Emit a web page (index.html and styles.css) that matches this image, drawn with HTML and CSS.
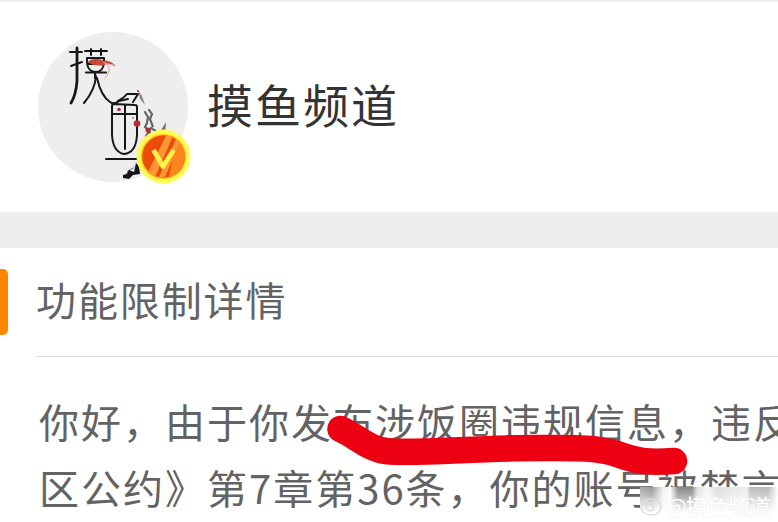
FILE: index.html
```html
<!DOCTYPE html>
<html lang="zh-CN">
<head>
<meta charset="utf-8">
<title>功能限制详情</title>
<link rel="stylesheet" href="styles.css">
</head>
<body>
<header class="profile">
  <svg class="avatar" width="156" height="156" viewBox="36 30 156 156" fill="none" stroke="#171719" stroke-linecap="round" stroke-linejoin="round">
    <circle cx="113" cy="107" r="75" fill="#eeeeef" stroke="none"/>
    <g stroke-width="2">
      <path d="M70 52h12M71 66l11-4M85 51h22M91 49v6M101 49v6M87 58h17v5q-1 9-8 9-8 0-9-9zM88 64h15M86 72.500h20M95 72v6"/>
      <path d="M77 48v33q-1 14-6 22" stroke-width="2.800"/>
      <path d="M96 76q-1 14-12 27M97 78q4 18 13 24 4 3 9-1l9-2" />
      <path d="M118 101q6-3 9-7h11l-5 8"/>
      <path d="M112 114v-8q0-2 2-2l21 1q2 0 2 2v28q-1 18-13 19-11-2-12-19zM112 114h25M125 105v44"/>
      <path d="M106 159h34"/>
    </g>
    <path d="M87 62q8-6 17-1 6-1 12 5-7-4-12-1-8 2-17-3z" fill="#c74839" stroke="none"/>
    <path d="M104 62q6 4 5 9-1 4-4 7M104 63l11 3" stroke="#dda09b" stroke-width="1"/>
    <path d="M138 90l4 6 3 9-5-6z" fill="#888" stroke="none"/>
    <path d="M145 112l3 5-1 6-2 4 5 5-2 8M149 110l3 4-2 5 3 8M146 136l5-8 6 4" stroke="#66666a" stroke-width="2.200" stroke-dasharray="3 .8"/>
    <path d="M160 132l6-10-1 12z" fill="#79696c" stroke="none"/>
    <path d="M137 159l-3 8-4 2 1 5-6 3 3-7 5-1z" fill="#777" stroke="none"/>
    <path d="M123 175l4-1 2-4 5 2 2-9 3 3 1 8-7 1-4 4-6-1z" fill="#151516" stroke="none"/>
    <g fill="#b92931" stroke="none"><circle cx="119" cy="109.500" r="1.8"/><circle cx="137" cy="123.500" r="3.300"/><circle cx="148" cy="130" r="2.500"/><circle cx="138" cy="91" r="1"/><circle cx="133" cy="118" r=".8"/></g>
    <circle cx="163.500" cy="156.500" r="27" fill="#fffa55" stroke="none"/>
    <circle cx="163.500" cy="156.500" r="22" fill="#ed4b08" stroke="#ffc91c" stroke-width="1.500"/>
    <path d="M176 139q9 7 9 17-1 18-16 21z" fill="#fb8620" stroke="none"/>
    <path d="M166 136h7l-18 41-7-5zM176 139l4 3-15 35h-6z" fill="#ff9636" stroke="none"/>
    <path d="M153.500 150l9.500 16.500L173.500 150" stroke="#fff34a" stroke-width="4.800" stroke-linecap="butt"/>
  </svg>
  <h1 class="name">摸鱼频道</h1>
</header>
<main class="details">
  <div class="heading"><span class="accent"></span><h2 class="title">功能限制详情</h2></div>
  <div class="message">
    <p>你好，由于你发布涉饭圈违规信息，违反</p>
    <p>区公约》第7章第36条，你的账号被禁言</p>
    <svg class="marker" width="370" height="80" viewBox="320 405 370 80">
      <path d="M340.500 429C358 437 371 451 390 451.500C432 453 475 448 541 448C573 448 595 447 617 454C636 461 647 463 674 461" fill="none" stroke="#ed0012" stroke-width="26.500" stroke-linecap="round" stroke-linejoin="round"/>
    </svg>
    <div class="watermark">
      <svg width="22" height="22" viewBox="0 0 22 22" fill="none" stroke="#ddd" stroke-width="1.300"><ellipse cx="11" cy="11" rx="10" ry="8"/><circle cx="10" cy="11" r="4"/></svg>
      <span>@摸鱼频道</span>
    </div>
  </div>
</main>
</body>
</html>
```
FILE: styles.css
```css
* { box-sizing: border-box; }
body {
  margin: 0;
  width: 778px;
  height: 522px;
  overflow: hidden;
  background: #fff;
  color: #636363;
  font-family: "Noto Sans CJK SC", sans-serif;
}
h1, h2, p { margin: 0; font-weight: 400; white-space: nowrap; }
.profile {
  display: flex;
  height: 212px;
  padding: 28px 0 0 36px;
  border-top: 2px solid #eee;
}
.avatar { flex: none; }
.name {
  margin: 38px 0 0 15px;
  height: 70px;
  color: #333;
  font-size: 46px;
  line-height: 70px;
  letter-spacing: 2px;
}
.details { border-top: 36px solid #ededed; }
.heading { display: flex; height: 109px; padding-top: 21px; }
.accent {
  width: 8px;
  height: 66px;
  background: #ff8500;
  border-radius: 0 5px 5px 0;
}
.title {
  flex: 1;
  height: 88px;
  margin-left: 28px;
  border-bottom: 1px solid #dedede;
  font-size: 40px;
  line-height: 60px;
  letter-spacing: 1.9px;
}
.message {
  position: relative;
  height: 165px;
  padding: 31px 0 0 39px;
  overflow: hidden;
}
.message p {
  height: 66px;
  font-size: 40px;
  line-height: 66px;
  letter-spacing: 2px;
}
.marker { position: absolute; left: 320px; top: 48px; }
.watermark {
  position: absolute;
  left: 640px;
  top: 130px;
  width: 138px;
  height: 35px;
  display: flex;
  align-items: flex-start;
  overflow: hidden;
  background:
    linear-gradient(180deg, transparent 0, rgba(255,255,255,.4) 11px, #fff 25px),
    linear-gradient(90deg, #aaa 0, #999 12px, #eee 23px, #fff 30px, #888 38px, #858585 52px, #ddd 57px, #f8f8f8 67px, #ddd 77px, #eee 107px, #bbb 110px, #b8b8b8 128px, #fff 138px);
}
.watermark svg { margin-top: 9px; flex: none; }
.watermark span {
  margin: 5px 0 0 4px;
  color: #fff;
  font-size: 22px;
  line-height: 26px;
  letter-spacing: -1px;
  white-space: nowrap;
  text-shadow: 0 0 1px #ddd;
}
```
